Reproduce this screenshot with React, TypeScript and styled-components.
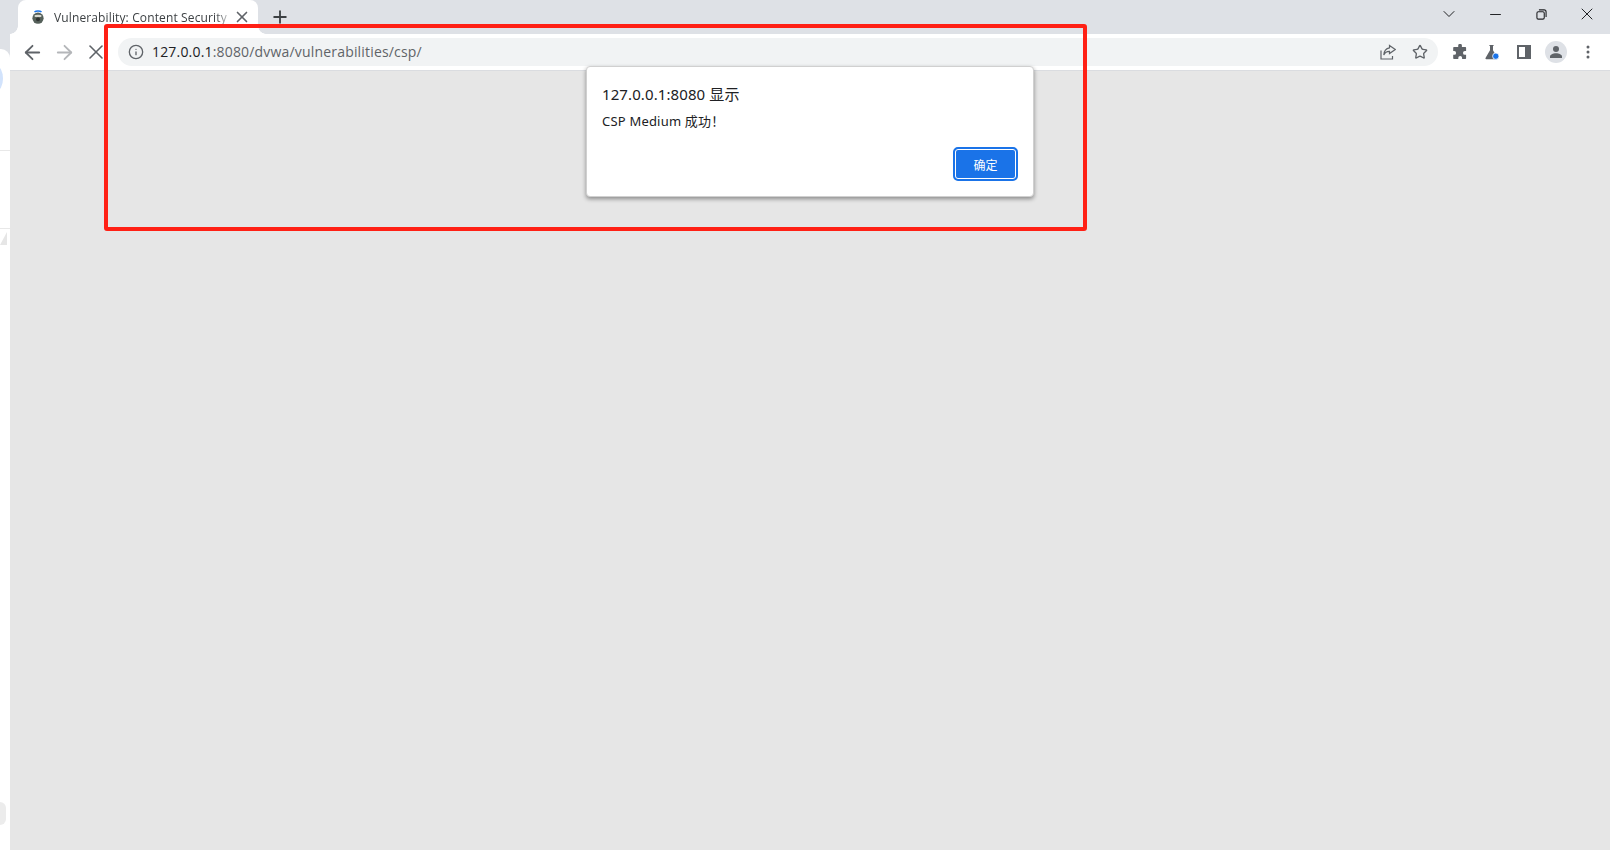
import React from "react";
import styled, { createGlobalStyle } from "styled-components";
import { ArrowLeft, ArrowRight, X, Plus, Minus, ChevronDown, Star, Info } from "lucide-react";

const GlobalStyle = createGlobalStyle`
  html, body {
    margin: 0;
    padding: 0;
    width: 1610px;
    height: 850px;
    overflow: hidden;
    background: #fff;
    font-family: "Noto Sans", "Noto Sans CJK SC", sans-serif;
  }
`;

const Screen = styled.div`
  position: relative;
  display: flex;
  width: 1610px;
  height: 850px;
`;

// the bit of another window that peeks out on the left
const Sliver = styled.aside`
  position: relative;
  width: 10px;
  flex: none;
  background: #dee1e6;
  overflow: hidden;
  .sheet {
    position: absolute;
    left: 0;
    right: 0;
    top: 49px;
    bottom: 0;
    background: #fff;
    border-radius: 0 9px 0 0;
  }
  .peek {
    position: absolute;
    left: -10px;
    top: 66px;
    width: 13px;
    height: 25px;
    border-radius: 50%;
    background: #d2e3fc;
  }
  .rule {
    position: absolute;
    left: 0;
    right: 0;
    height: 1px;
    background: #e8e8e8;
  }
  .rule.one {
    top: 150px;
  }
  .rule.two {
    top: 228px;
  }
  .wedge {
    position: absolute;
    left: 0;
    top: 232px;
    width: 0;
    height: 0;
    border-left: 7px solid transparent;
    border-right: 0 solid transparent;
    border-bottom: 13px solid #e6e6e6;
  }
  .pill {
    position: absolute;
    left: 0;
    top: 802px;
    width: 6px;
    height: 23px;
    border-radius: 0 6px 6px 0;
    background: #ececec;
  }
`;

const Browser = styled.div`
  flex: 1;
  display: flex;
  flex-direction: column;
  min-width: 0;
`;

const TabStrip = styled.div`
  height: 34px;
  flex: none;
  display: flex;
  align-items: flex-end;
  background: #dee1e6;
  padding-left: 8px;
`;

const Tab = styled.div`
  position: relative;
  width: 240px;
  height: 34px;
  display: flex;
  align-items: center;
  box-sizing: border-box;
  padding: 0 7px 0 14px;
  background: #fff;
  border-radius: 8px 8px 0 0;
  color: #3c4043;
  &::before,
  &::after {
    content: "";
    position: absolute;
    bottom: 0;
    width: 8px;
    height: 8px;
  }
  &::before {
    left: -8px;
    background: radial-gradient(circle at 0 0, transparent 7.5px, #fff 8px);
  }
  &::after {
    right: -8px;
    background: radial-gradient(circle at 100% 0, transparent 7.5px, #fff 8px);
  }
`;

const TabTitle = styled.span`
  flex: 1;
  margin-left: 10px;
  white-space: nowrap;
  font-family: "Open Sans", "Noto Sans", sans-serif;
  font-size: 12px;
  letter-spacing: 0.13px;
  -webkit-mask-image: linear-gradient(to right, #000 90%, transparent 100%);
  mask-image: linear-gradient(to right, #000 90%, transparent 100%);
`;

const TabClose = styled.div`
  width: 18px;
  flex: none;
  display: flex;
  justify-content: center;
  color: #5f6368;
`;

const NewTab = styled.div`
  margin: 0 0 1px 12px;
  height: 33px;
  display: flex;
  align-items: center;
  color: #3c4043;
`;

const Spacer = styled.div`
  flex: 1;
`;

const WindowButtons = styled.div`
  display: flex;
  align-self: flex-start;
  align-items: center;
  height: 28px;
  color: #202124;
`;

const WinBtn = styled.div<{ $w: number }>`
  width: ${(p) => p.$w}px;
  display: flex;
  justify-content: center;
`;

const Toolbar = styled.div`
  height: 37px;
  flex: none;
  display: flex;
  align-items: center;
  box-sizing: border-box;
  background: #fff;
  border-bottom: 1px solid #dadce0;
  padding-left: 6px;
`;

const NavBtn = styled.div<{ $faded?: boolean }>`
  width: 32px;
  display: flex;
  justify-content: center;
  color: ${(p) => (p.$faded ? "#b4b6b9" : "#5f6368")};
`;

const Omnibox = styled.div`
  width: 1320px;
  height: 28px;
  margin-left: 6px;
  display: flex;
  align-items: center;
  border-radius: 14px;
  background: #f1f3f4;
  padding: 0 2px 0 10px;
  box-sizing: border-box;
  color: #5f6368;
`;

const Url = styled.div`
  flex: 1;
  margin: 0 0 2px 8px;
  font-family: "Open Sans", "Noto Sans", sans-serif;
  font-size: 14px;
  letter-spacing: 0.18px;
  color: #5f6368;
  b {
    font-weight: 400;
    color: #202124;
  }
`;

const OmniIcon = styled.div`
  width: 32px;
  display: flex;
  justify-content: center;
  color: #5f6368;
`;

const Extensions = styled.div`
  display: flex;
  align-items: center;
  margin-left: 6px;
  color: #5f6368;
`;

const ExtBtn = styled.div`
  width: 32px;
  display: flex;
  justify-content: center;
  align-items: center;
`;

const Avatar = styled.div`
  width: 22px;
  height: 22px;
  border-radius: 50%;
  background: #dee1e6;
  display: flex;
  align-items: center;
  justify-content: center;
`;

const Page = styled.main`
  flex: 1;
  background: #e6e6e6;
`;

const Dialog = styled.div`
  position: absolute;
  left: 586px;
  top: 66px;
  width: 448px;
  height: 131px;
  box-sizing: border-box;
  padding: 17px 15px 15px 15px;
  background: #fff;
  border-radius: 4px;
  border: 1px solid #d0d0d0;
  box-shadow: 0 2px 4px rgba(0, 0, 0, 0.4);
  display: flex;
  flex-direction: column;
  color: #202124;
`;

const DialogTitle = styled.div`
  font-size: 15px;
  line-height: 20px;
  letter-spacing: 0.1px;
`;

const DialogText = styled.div`
  margin-top: 7px;
  font-size: 13px;
  line-height: 20px;
  letter-spacing: 0.2px;
`;

const DialogActions = styled.div`
  margin-top: auto;
  display: flex;
  justify-content: flex-end;
`;

const OkButton = styled.div`
  width: 65px;
  height: 34px;
  box-sizing: border-box;
  padding-top: 1px;
  background: #1a73e8;
  border-radius: 5px;
  border: 2px solid #1a73e8;
  box-shadow: inset 0 0 0 1px #fff;
  color: #fff;
  font-size: 12px;
  display: flex;
  align-items: center;
  justify-content: center;
`;

const Annotation = styled.div`
  position: absolute;
  left: 104px;
  top: 24px;
  width: 983px;
  height: 207px;
  box-sizing: border-box;
  border: 4px solid #ff2015;
  border-radius: 3px;
  pointer-events: none;
`;

const Favicon = () => (
  <svg width="12" height="14" viewBox="0 0 12 14">
    <path d="M2.5 2 C4 .6 8 .6 9.5 2" stroke="#1a73e8" strokeWidth="1.5" fill="none" />
    <circle cx="6" cy="8.2" r="5.6" fill="#55605a" />
    <ellipse cx="6" cy="6" rx="3.6" ry="1.2" fill="#d8d8d0" />
    <circle cx="6" cy="9.2" r="2" fill="#2f3331" />
  </svg>
);

const Share = () => (
  <svg width="16" height="16" viewBox="0 0 16 16" fill="none" stroke="#5f6368" strokeWidth="1.2">
    <path d="M1 6.5V15h11.5v-3" />
    <path d="M9.5 1.5 15.3 5.6 9.5 9.6V7.4C7 7.3 5 8.5 3.8 11 4 7.3 6 4.4 9.5 3.8Z" />
  </svg>
);

const Puzzle = () => (
  <svg width="16" height="16" viewBox="0 0 16 16" fill="#5f6368">
    <path d="M6.2 1.2a1.9 1.9 0 0 1 3.7 0V3h3.2c.6 0 1 .4 1 1v3h-1.2a1.9 1.9 0 0 0 0 3.8h1.2V14c0 .6-.4 1-1 1h-3v-1.2a1.9 1.9 0 0 0-3.8 0V15H2.2c-.6 0-1-.4-1-1v-3.2h1a1.9 1.9 0 0 0 0-3.8h-1V4c0-.6.4-1 1-1h4z" />
  </svg>
);

const Flask = () => (
  <svg width="16" height="16" viewBox="0 0 16 16">
    <path d="M5.4 1h4.2v1H9v4.2L13.5 14c.3.6-.1 1.2-.8 1.2H2.3c-.7 0-1.1-.6-.8-1.2L6 6.2V2h-.6z" fill="#5f6368" />
    <circle cx="11.8" cy="12.2" r="3.2" fill="#1a73e8" stroke="#fff" strokeWidth="0.8" />
  </svg>
);

const SidePanel = () => (
  <svg width="14" height="14" viewBox="0 0 14 14">
    <path d="M0 0h14v14H0z" fill="#5f6368" />
    <path d="M2 2h6v10H2z" fill="#fff" />
  </svg>
);

const Person = () => (
  <svg width="14" height="14" viewBox="0 0 14 14" fill="#5f6368">
    <circle cx="7" cy="4" r="3" />
    <path d="M1 13v-1.5C1 9.5 4 8.2 7 8.2s6 1.3 6 3.3V13z" />
  </svg>
);

const Kebab = () => (
  <svg width="4" height="14" viewBox="0 0 4 14" fill="#5f6368">
    <circle cx="2" cy="2" r="1.5" />
    <circle cx="2" cy="7" r="1.5" />
    <circle cx="2" cy="12" r="1.5" />
  </svg>
);

const Restore = () => (
  <svg width="11" height="11" viewBox="0 0 12 12" fill="none" stroke="#202124" strokeWidth="1.2">
    <rect x="1" y="3" width="8" height="8" rx="1.5" />
    <path d="M3.2 1h5.6A2.2 2.2 0 0 1 11 3.2v5.6" />
  </svg>
);

export default function App() {
  return (
    <>
      <GlobalStyle />
      <Screen>
        <Sliver>
          <span className="sheet" />
          <span className="peek" />
          <span className="rule one" />
          <span className="rule two" />
          <span className="wedge" />
          <span className="pill" />
        </Sliver>
        <Browser>
          <TabStrip>
            <Tab>
              <Favicon />
              <TabTitle>Vulnerability: Content Security</TabTitle>
              <TabClose><X size={18} strokeWidth={2.2} /></TabClose>
            </Tab>
            <NewTab>
              <Plus size={20} strokeWidth={2.2} />
            </NewTab>
            <Spacer />
            <WindowButtons>
              <WinBtn $w={46}><ChevronDown size={20} strokeWidth={1.2} /></WinBtn>
              <WinBtn $w={46}><Minus size={17} strokeWidth={1.4} /></WinBtn>
              <WinBtn $w={46}><Restore /></WinBtn>
              <WinBtn $w={46}><X size={20} strokeWidth={1.2} /></WinBtn>
            </WindowButtons>
          </TabStrip>
          <Toolbar>
            <NavBtn><ArrowLeft size={23} strokeWidth={1.9} /></NavBtn>
            <NavBtn $faded><ArrowRight size={23} strokeWidth={1.9} /></NavBtn>
            <NavBtn><X size={24} strokeWidth={1.6} /></NavBtn>
            <Omnibox>
              <Info size={16} strokeWidth={2} />
              <Url><b>127.0.0.1</b>:8080/dvwa/vulnerabilities/csp/</Url>
              <OmniIcon><Share /></OmniIcon>
              <OmniIcon><Star size={16} strokeWidth={2} /></OmniIcon>
            </Omnibox>
            <Extensions>
              <ExtBtn><Puzzle /></ExtBtn>
              <ExtBtn><Flask /></ExtBtn>
              <ExtBtn><SidePanel /></ExtBtn>
              <ExtBtn><Avatar><Person /></Avatar></ExtBtn>
              <ExtBtn><Kebab /></ExtBtn>
            </Extensions>
          </Toolbar>
          <Page />
        </Browser>
        <Dialog>
          <DialogTitle>127.0.0.1:8080 显示</DialogTitle>
          <DialogText>CSP Medium 成功！</DialogText>
          <DialogActions>
            <OkButton>确定</OkButton>
          </DialogActions>
        </Dialog>
        <Annotation />
      </Screen>
    </>
  );
}
